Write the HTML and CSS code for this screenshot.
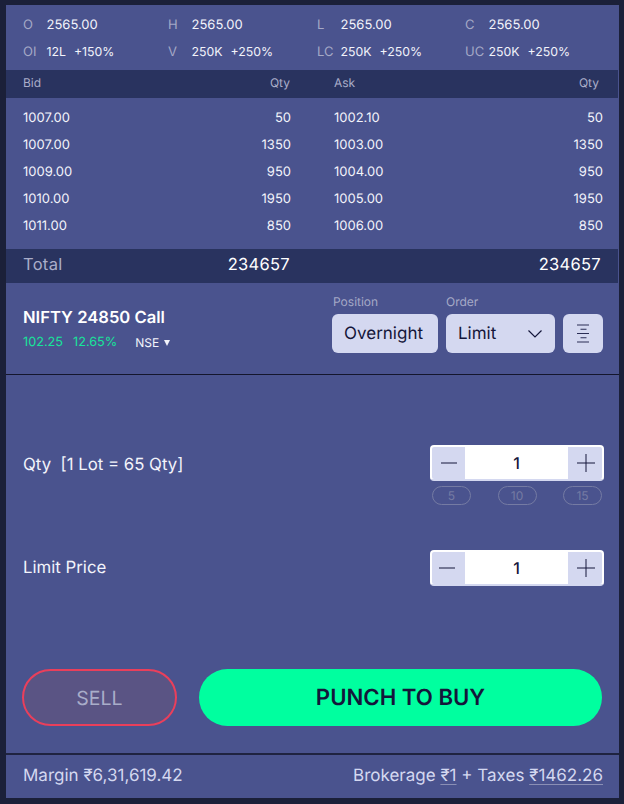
FILE: index.html
```html
<!DOCTYPE html>
<html lang="en">
<head>
<meta charset="utf-8">
<title>Order</title>
<link rel="stylesheet" href="styles.css">
</head>
<body>
<main class="panel">
  <section class="stats">
    <div class="stat-row">
      <div class="stat"><span class="k">O</span><span class="v">2565.00</span></div>
      <div class="stat"><span class="k">H</span><span class="v">2565.00</span></div>
      <div class="stat"><span class="k">L</span><span class="v">2565.00</span></div>
      <div class="stat"><span class="k">C</span><span class="v">2565.00</span></div>
    </div>
    <div class="stat-row second">
      <div class="stat"><span class="k">OI</span><span class="v">12L</span><span class="v p">+150%</span></div>
      <div class="stat"><span class="k">V</span><span class="v">250K</span><span class="v p">+250%</span></div>
      <div class="stat"><span class="k">LC</span><span class="v">250K</span><span class="v p">+250%</span></div>
      <div class="stat"><span class="k">UC</span><span class="v">250K</span><span class="v p">+250%</span></div>
    </div>
  </section>

  <section class="book">
    <div class="book-row head"><span>Bid</span><span class="r">Qty</span><span>Ask</span><span class="r">Qty</span></div>
    <div class="rows">
      <div class="book-row"><span>1007.00</span><span class="r">50</span><span>1002.10</span><span class="r">50</span></div>
      <div class="book-row"><span>1007.00</span><span class="r">1350</span><span>1003.00</span><span class="r">1350</span></div>
      <div class="book-row"><span>1009.00</span><span class="r">950</span><span>1004.00</span><span class="r">950</span></div>
      <div class="book-row"><span>1010.00</span><span class="r">1950</span><span>1005.00</span><span class="r">1950</span></div>
      <div class="book-row"><span>1011.00</span><span class="r">850</span><span>1006.00</span><span class="r">850</span></div>
    </div>
    <div class="book-row total"><span class="total-label">Total</span><span class="r">234657</span><span></span><span class="r">234657</span></div>
  </section>

  <section class="instrument">
    <div class="inst-info">
      <div class="inst-name">NIFTY 24850 Call</div>
      <div class="inst-sub"><span class="up">102.25</span><span class="up">12.65%</span><span class="exch">NSE <i class="caret"></i></span></div>
    </div>
    <div class="controls">
      <div class="field">
        <label class="field-label">Position</label>
        <div class="select pos">Overnight</div>
      </div>
      <div class="field">
        <label class="field-label order-label">Order</label>
        <div class="select ord">Limit
          <svg class="chev" width="16" height="10" viewBox="0 0 16 10"><path d="M1.500 1.500 8 8l6.500-6.500" fill="none" stroke="#14163a" stroke-width="1.200"/></svg>
        </div>
      </div>
      <div class="select icon-btn">
        <svg width="12" height="19" viewBox="0 0 12 19"><path d="M0 1h12M3.500 5.250h6M0 9.500h12M3.500 13.750h6M0 18h12" fill="none" stroke="#2a2d55" stroke-width="1.100"/></svg>
      </div>
    </div>
  </section>

  <section class="entry">
    <div class="entry-row qty">
      <div class="entry-label">Qty&nbsp; [1 Lot = 65 Qty]</div>
      <div class="stepper-wrap">
        <div class="stepper">
          <span class="step minus"><svg width="16" height="18" viewBox="0 0 16 18"><path d="M0 9h16" stroke="#14163a" stroke-width="1"/></svg></span>
          <span class="step-val">1</span>
          <span class="step plus"><svg width="18" height="18" viewBox="0 0 18 18"><path d="M0 9h18M9 0v18" stroke="#14163a" stroke-width="1"/></svg></span>
        </div>
        <div class="chips"><span class="chip">5</span><span class="chip">10</span><span class="chip">15</span></div>
      </div>
    </div>
    <div class="entry-row price">
      <div class="entry-label">Limit Price</div>
      <div class="stepper">
        <span class="step minus minus-2"><svg width="16" height="18" viewBox="0 0 16 18"><path d="M0 9h16" stroke="#14163a" stroke-width="1"/></svg></span>
        <span class="step-val">1</span>
        <span class="step plus"><svg width="18" height="18" viewBox="0 0 18 18"><path d="M0 9h18M9 0v18" stroke="#14163a" stroke-width="1"/></svg></span>
      </div>
    </div>
    <div class="actions">
      <button class="sell" type="button">SELL</button>
      <button class="buy" type="button">PUNCH TO BUY</button>
    </div>
  </section>

  <footer class="foot">
    <span>Margin ₹6,31,619.42</span>
    <span>Brokerage <u>₹1</u> + Taxes <u>₹1462.26</u></span>
  </footer>
</main>
</body>
</html>
```
FILE: styles.css
```css
* { box-sizing: border-box; }
html, body { margin: 0; height: 100%; }
body {
  background: #1b2039;
  font-family: Inter, "Noto Sans", sans-serif;
  text-rendering: geometricPrecision;
  color: #fff;
  width: 624px;
  height: 804px;
  overflow: hidden;
  padding: 5px 5px 6px 6px;
}
.panel {
  width: 613px;
  height: 793px;
  background: #4a538e;
  display: flex;
  flex-direction: column;
}
.stats {
  height: 65px;
  padding: 6px 0 0 17px;
}
.stat-row {
  display: grid;
  grid-template-columns: 145px 149px 148px 1fr;
  height: 27px;
  align-items: center;
  font-size: 13px;
}
.stat { display: flex; align-items: baseline; }
.k { width: 23.500px; color: #a5a9c6; }
.v { color: #f3f4fb; }
.second .v { font-size: 12.300px; }
.p { margin-left: 8px; }

.book-row {
  display: grid;
  grid-template-columns: 134px 134px 177px 1fr;
  padding: 0 16px 0 17px;
  align-items: center;
  font-size: 13px;
  height: 27px;
  color: #f3f4fb;
}
.book-row > span:nth-child(3) { padding-left: 43px; }
.r { text-align: right; }
.head {
  height: 28px;
  background: #29335f;
  font-size: 12px;
  color: #a9adc9;
  margin-right: 1px;
  padding-right: 19px;
  padding-bottom: 3px;
}
.head > span:nth-child(2) { margin-right: 1px; }
.rows { padding: 6px 0 9.500px; }
.total {
  height: 34px;
  background: #29335f;
  font-size: 16.500px;
  letter-spacing: .3px;
  color: #fff;
  margin-right: 1px;
  padding-right: 17px;
  padding-bottom: 3px;
}
.total > span:nth-child(2) { margin-right: 1px; }
.total-label { color: #a9adc9; }

.instrument {
  height: 92px;
  display: flex;
  justify-content: space-between;
  padding: 0 16px 0 17px;
  border-bottom: 1px solid #14162c;
}
.inst-info { padding-top: 25px; }
.inst-name { font-size: 16.600px; font-weight: 600; line-height: 20px; color: #fff; }
.inst-sub { display: flex; font-size: 12.700px; line-height: 16px; margin-top: 7px; }
.up { color: #17e59a; margin-right: 10px; }
.exch { color: #f3f4fb; font-size: 12px; margin-left: 8px; display: flex; align-items: center; gap: 5px; }
.caret {
  width: 0; height: 0;
  border-left: 3.500px solid transparent;
  border-right: 3.500px solid transparent;
  border-top: 6px solid #f3f4fb;
}
.controls { display: flex; align-items: flex-end; gap: 8px; padding-bottom: 21px; }
.field { display: flex; flex-direction: column; }
.field-label { font-size: 12px; line-height: 14px; color: #a5a9c6; margin-bottom: 5px; padding-left: 1px; }
.order-label { padding-left: 0; }
.select {
  height: 39px;
  background: #d4d8f0;
  border-radius: 6px;
  color: #14163a;
  font-size: 17px;
  display: flex;
  align-items: center;
  padding-top: 1px;
}
.pos { width: 106px; padding-left: 12px; }
.ord { width: 109px; padding-left: 12px; padding-right: 12px; justify-content: space-between; }
.icon-btn { width: 40px; justify-content: center; padding-top: 0; }

.entry { flex: 1; padding: 0 15px 0 17px; display: flex; flex-direction: column; }
.entry-row { display: flex; justify-content: space-between; }
.qty { padding-top: 70px; height: 175px; align-items: flex-start; }
.qty .entry-label { padding-top: 8px; }
.price { height: 36px; align-items: center; }
.entry-label { font-size: 16.800px; line-height: 24px; color: #f3f4fb; }
.stepper {
  width: 174px;
  height: 36px;
  border: 2px solid #fff;
  border-bottom-color: #d4d8f0;
  border-radius: 4px;
  background: #fff;
  display: flex;
  overflow: hidden;
}
.step {
  width: 34px;
  background: #d4d8f0;
  display: flex;
  align-items: center;
  justify-content: center;
}
.minus { width: 33px; }
.plus svg { margin-left: 1px; }
.minus-2 svg { margin-left: -3px; }
.step-val {
  flex: 1;
  text-align: center;
  font-size: 16px;
  line-height: 32px;
  color: #14163a;
  font-weight: 500;
}
.chips { display: flex; justify-content: space-between; padding: 5px 2px 0 2px; }
.chip {
  width: 39px;
  height: 19px;
  border: 1px solid #757ba3;
  border-radius: 10px;
  font-size: 12px;
  line-height: 17px;
  text-align: center;
  color: #757ba3;
}
.actions { display: flex; gap: 22px; margin: 83px 2px 0 -1px; }
.actions button { height: 57px; border-radius: 29px; font-family: inherit; padding: 1px 0 0; text-rendering: inherit; }
.sell {
  width: 155px;
  background: #5a5484;
  border: 2px solid #ea3f5b;
  color: #a9adc9;
  font-size: 19.500px;
}
.buy {
  flex: 1;
  border: 0;
  background: #00ff9f;
  color: #14163a;
  font-size: 22.200px;
  font-weight: 600;
}
.foot {
  height: 45px;
  border-top: 2px solid #1f2340;
  padding: 0 16px 2px 17px;
  display: flex;
  align-items: center;
  justify-content: space-between;
  font-size: 17px;
  color: #d4d8f0;
}
.foot u { text-decoration: underline; text-decoration-color: #8a8fb5; text-underline-offset: 3px; text-decoration-thickness: 1px; }
```
